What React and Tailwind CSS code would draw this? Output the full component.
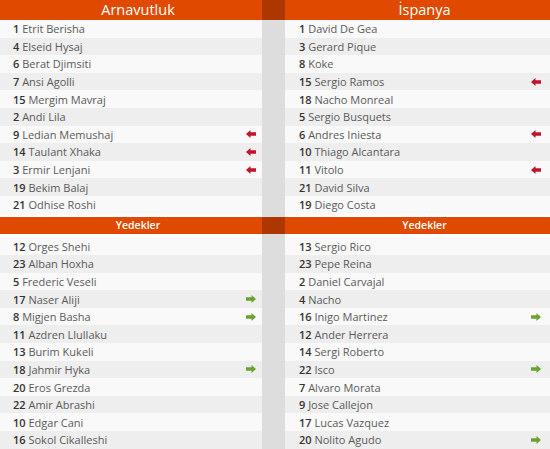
import React from "react";

const albStart = [
  ["1", "Etrit Berisha"], ["4", "Elseid Hysaj"], ["6", "Berat Djimsiti"], ["7", "Ansi Agolli"],
  ["15", "Mergim Mavraj"], ["2", "Andi Lila"], ["9", "Ledian Memushaj", "out"], ["14", "Taulant Xhaka", "out"],
  ["3", "Ermir Lenjani", "out"], ["19", "Bekim Balaj"], ["21", "Odhise Roshi"],
];
const espStart = [
  ["1", "David De Gea"], ["3", "Gerard Pique"], ["8", "Koke"], ["15", "Sergio Ramos", "out"],
  ["18", "Nacho Monreal"], ["5", "Sergio Busquets"], ["6", "Andres Iniesta", "out"], ["10", "Thiago Alcantara"],
  ["11", "Vitolo", "out"], ["21", "David Silva"], ["19", "Diego Costa"],
];
const albSub = [
  ["12", "Orges Shehi"], ["23", "Alban Hoxha"], ["5", "Frederic Veseli"], ["17", "Naser Aliji", "in"],
  ["8", "Migjen Basha", "in"], ["11", "Azdren Llullaku"], ["13", "Burim Kukeli"], ["18", "Jahmir Hyka", "in"],
  ["20", "Eros Grezda"], ["22", "Amir Abrashi"], ["10", "Edgar Cani"], ["16", "Sokol Cikalleshi"],
];
const espSub = [
  ["13", "Sergio Rico"], ["23", "Pepe Reina"], ["2", "Daniel Carvajal"], ["4", "Nacho"],
  ["16", "Inigo Martinez", "in"], ["12", "Ander Herrera"], ["14", "Sergi Roberto"], ["22", "Isco", "in"],
  ["7", "Alvaro Morata"], ["9", "Jose Callejon"], ["17", "Lucas Vazquez"], ["20", "Nolito Agudo", "in"],
];

function ArrowLeft() {
  return (
    <svg width="10" height="8" viewBox="0 0 10 8">
      <path d="M0 4 L4.5 0 L4.5 2.3 L10 2.3 L10 5.7 L4.5 5.7 L4.5 8 Z" fill="#c0142a" />
    </svg>
  );
}
function ArrowRight() {
  return (
    <svg width="10" height="8" viewBox="0 0 10 8">
      <path d="M10 4 L5.5 0 L5.5 2.3 L0 2.3 L0 5.7 L5.5 5.7 L5.5 8 Z" fill="#6aa232" />
    </svg>
  );
}

function Row({ p, i, right }) {
  const [num, name, mark] = p;
  return (
    <div
      className={`h-[17.6px] flex items-center justify-between ${right ? "pl-[14px] pr-[9px]" : "pl-[13px] pr-[6px]"} ${
        i % 2 === 0 ? "bg-[#f9f9f9]" : "bg-[#eeeeee]"
      }`}
    >
      <span className="text-[11px] leading-none text-[#5a5a5a]">
        <span className="font-semibold text-[#333]">{num}</span> {name}
      </span>
      {mark === "out" && <ArrowLeft />}
      {mark === "in" && <ArrowRight />}
    </div>
  );
}

function List({ rows, right }) {
  return (
    <div className="flex flex-col">
      {rows.map((p, i) => (
        <Row key={i} p={p} i={i} right={right} />
      ))}
    </div>
  );
}

export default function App() {
  return (
    <div
      className="w-[550px] h-[449px] overflow-hidden bg-white"
      style={{ fontFamily: '"Open Sans", "Noto Sans", sans-serif' }}
    >
      <div className="grid grid-cols-[262px_23px_265px]">
        <div className="h-[20px] bg-[#e04a00] flex items-center justify-center pl-[14px] text-white text-[14.5px]">
          Arnavutluk
        </div>
        <div className="h-[20px] bg-[#ad3700]" />
        <div className="h-[20px] bg-[#e04a00] flex items-center justify-center pl-[14px] text-white text-[14.5px]">
          İspanya
        </div>

        <List rows={albStart} />
        <div className="bg-[#dddddd]" />
        <List rows={espStart} right />

        <div className="h-[3.4px] bg-white" />
        <div className="h-[3.4px] bg-[#dddddd]" />
        <div className="h-[3.4px] bg-white" />

        <div className="h-[17px] bg-[#e04a00] flex items-center justify-center pl-[14px] text-white text-[10.5px] font-semibold">
          Yedekler
        </div>
        <div className="h-[17px] bg-[#ad3700]" />
        <div className="h-[17px] bg-[#e04a00] flex items-center justify-center pl-[14px] text-white text-[10.5px] font-semibold">
          Yedekler
        </div>

        <div className="h-[3.6px] bg-white" />
        <div className="h-[3.6px] bg-[#dddddd]" />
        <div className="h-[3.6px] bg-white" />

        <List rows={albSub} />
        <div className="bg-[#dddddd]" />
        <List rows={espSub} right />
      </div>
    </div>
  );
}
